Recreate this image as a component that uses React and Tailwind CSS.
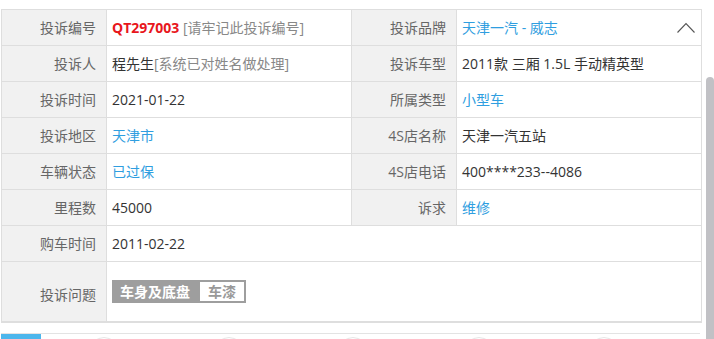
import { Fragment } from "react"

const rows = [
  [
    { label: "投诉编号", value: (
      <>
        <span className="font-bold text-[#e8161c]">QT297003</span>
        <span className="text-[#888]"> [请牢记此投诉编号]</span>
      </>
    ) },
    { label: "投诉品牌", value: <span className="text-[#2f9ee0]">天津一汽 - 威志</span>, chevron: true },
  ],
  [
    { label: "投诉人", value: (
      <>
        程先生<span className="text-[#888]">[系统已对姓名做处理]</span>
      </>
    ) },
    { label: "投诉车型", value: "2011款 三厢 1.5L 手动精英型" },
  ],
  [
    { label: "投诉时间", value: "2021-01-22" },
    { label: "所属类型", value: <span className="text-[#2f9ee0]">小型车</span> },
  ],
  [
    { label: "投诉地区", value: <span className="text-[#2f9ee0]">天津市</span> },
    { label: "4S店名称", value: "天津一汽五站" },
  ],
  [
    { label: "车辆状态", value: <span className="text-[#2f9ee0]">已过保</span> },
    { label: "4S店电话", value: "400****233--4086" },
  ],
  [
    { label: "里程数", value: "45000" },
    { label: "诉求", value: <span className="text-[#2f9ee0]">维修</span> },
  ],
]

function ChevronUp() {
  return (
    <svg width="18" height="11" viewBox="0 0 18 11" className="shrink-0">
      <polyline points="0.5,10.5 9,1.5 17.5,10.5" fill="none" stroke="#555" strokeWidth="1.1" />
    </svg>
  )
}

const labelCls = "w-[105px] h-[36px] border border-[#dedede] bg-[#f1f1f1] pr-[10px] text-right text-[#666] align-middle"
const valueCls = "h-[36px] border border-[#dedede] pl-[5px] text-left text-[#333] align-middle"

export default function App() {
  return (
    <div
      className="flex h-[339px] w-[714px] overflow-hidden bg-white text-[14px]"
      style={{ fontFamily: '"Open Sans", "Noto Sans CJK SC", sans-serif' }}
    >
      <div className="w-[706px] pl-px pt-[9px]">
        <table className="w-[700px] table-fixed border-collapse leading-[20px]">
          <colgroup>
            <col className="w-[105px]" />
            <col className="w-[245px]" />
            <col className="w-[105px]" />
            <col className="w-[245px]" />
          </colgroup>
          <tbody>
            {rows.map((pair, i) => (
              <tr key={i}>
                {pair.map((cell) => (
                  <Fragment key={cell.label}>
                    <td className={labelCls}>{cell.label}</td>
                    <td className={valueCls}>
                      <div className="flex items-center justify-between pr-[6px]">
                        <span className="whitespace-nowrap">{cell.value}</span>
                        {cell.chevron && <ChevronUp />}
                      </div>
                    </td>
                  </Fragment>
                ))}
              </tr>
            ))}
            <tr>
              <td className={labelCls}>购车时间</td>
              <td colSpan={3} className={valueCls}>2011-02-22</td>
            </tr>
            <tr>
              <td className="h-[60px] border border-b-2 border-[#dedede] bg-[#f1f1f1] pr-[10px] pt-[8px] text-right text-[#666] align-middle">
                投诉问题
              </td>
              <td colSpan={3} className="h-[60px] border border-b-2 border-[#dedede] pl-[5px] align-middle">
                {/* problem tags */}
                <div className="flex font-bold leading-[19px]">
                  <span className="border-2 border-[#9e9e9e] bg-[#9e9e9e] px-[6px] text-white">车身及底盘</span>
                  <span className="border-2 border-[#9e9e9e] bg-white px-[8px] text-[#999]">车漆</span>
                </div>
              </td>
            </tr>
          </tbody>
        </table>

        {/* tab strip below the table */}
        <div className="mt-[10px] w-[699px] border-t border-[#e3e3e3]">
          <div className="relative flex h-[12px]">
            <div className="h-[12px] w-[40px] bg-[#4cb6ec]" />
            {[104, 229, 353, 479, 604].map((x) => (
              <div
                key={x}
                className="absolute top-[3px] h-[30px] w-[30px] rounded-full border border-[#e6e6e6]"
                style={{ left: x - 16 }}
              />
            ))}
          </div>
        </div>
      </div>

      {/* scrollbar */}
      <div className="w-[8px] pt-[77px]">
        <div className="h-full rounded-t-[4px] bg-[#c1c1c5]" />
      </div>
    </div>
  )
}
